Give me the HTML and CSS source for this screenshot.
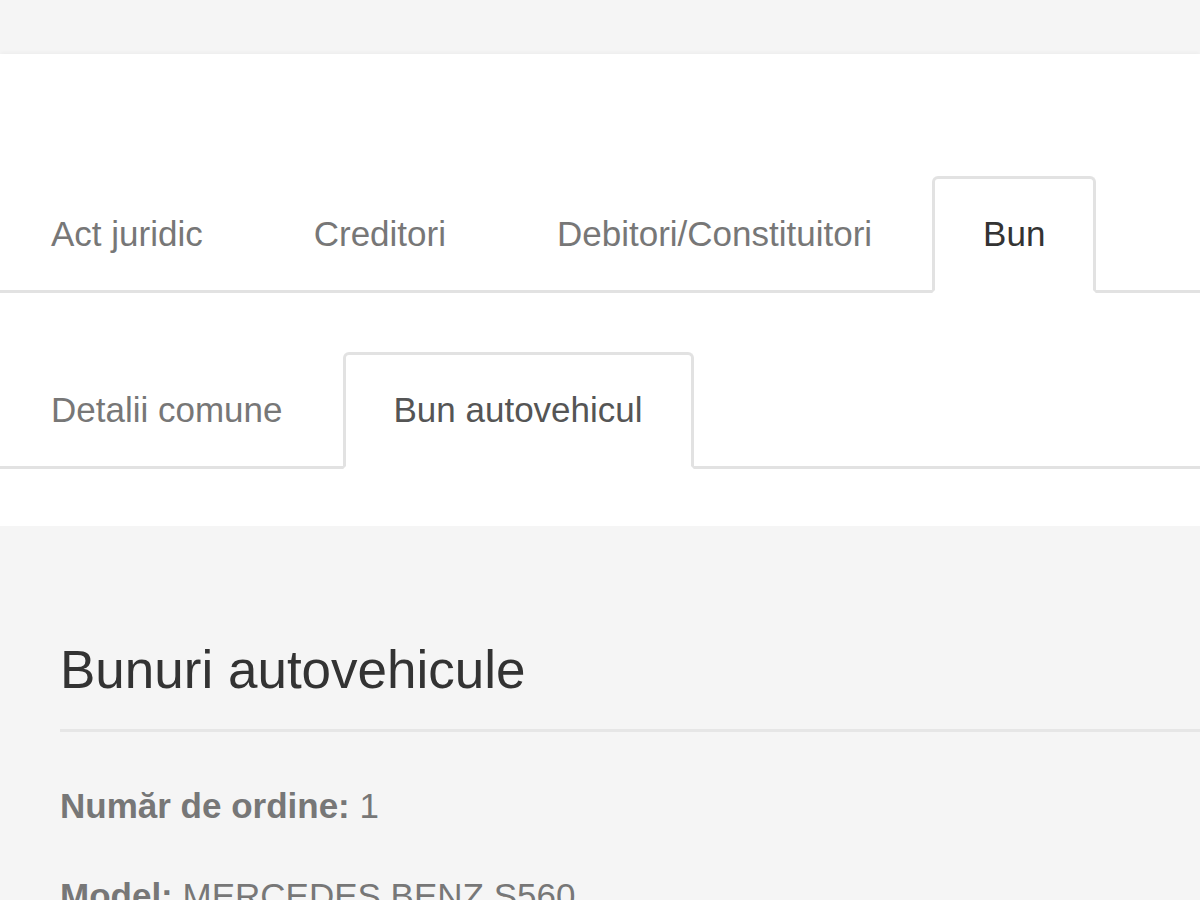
FILE: index.html
```html
<!DOCTYPE html>
<html lang="ro">
<head>
<meta charset="utf-8">
<title>Bun autovehicul</title>
<link rel="stylesheet" href="styles.css">
</head>
<body>
<div class="topbar"></div>
<div class="panel">
  <ul class="tabs tabs-main">
    <li class="tab">Act juridic</li>
    <li class="tab">Creditori</li>
    <li class="tab">Debitori/Constituitori</li>
    <li class="tab active">Bun</li>
  </ul>
  <ul class="tabs tabs-sub">
    <li class="tab">Detalii comune</li>
    <li class="tab active sub-active">Bun autovehicul</li>
  </ul>
</div>
<div class="content">
  <h2 class="title">Bunuri autovehicule</h2>
  <hr class="rule">
  <p class="field"><b class="label">Număr de ordine:</b> 1</p>
  <p class="field"><b class="label">Model:</b> MERCEDES BENZ S560</p>
</div>
</body>
</html>
```
FILE: styles.css
```css
html, body {
  margin: 0;
  padding: 0;
}
body {
  background: #f5f5f5;
  font-family: "Liberation Sans", Arial, sans-serif;
  overflow: hidden;
  height: 900px;
}
.topbar {
  height: 54px;
  background: #f5f5f5;
}
.panel {
  background: #fff;
  padding-top: 122px;
  padding-bottom: 57px;
  box-shadow: 0 -2px 4px rgba(0, 0, 0, 0.03);
}
.tabs {
  list-style: none;
  margin: 0;
  padding: 0;
  display: flex;
  border-bottom: 3px solid #e2e2e2;
}
.tabs-sub {
  margin-top: 59px;
}
.tab {
  font-size: 35px;
  line-height: 50px;
  padding: 30px 48px 31px;
  margin-right: 9px;
  margin-bottom: -3px;
  border: 3px solid transparent;
  border-radius: 6px 6px 0 0;
  color: #777;
  white-space: nowrap;
}
.tab.active {
  border-color: #e2e2e2;
  border-bottom-color: #fff;
  background: #fff;
  color: #333;
}
.tab.sub-active {
  color: #555;
}
.content {
  padding: 115px 0 0 60px;
}
.title {
  margin: 0;
  font-size: 53px;
  line-height: 58px;
  font-weight: normal;
  color: #333;
}
.rule {
  margin: 30px 0 0;
  border: 0;
  border-top: 3px solid #e6e6e6;
}
.field {
  margin: 40px 0 0;
  font-size: 35px;
  line-height: 50px;
  color: #777;
}
.rule + .field {
  margin-top: 49px;
}
.label {
  font-weight: bold;
}
```
